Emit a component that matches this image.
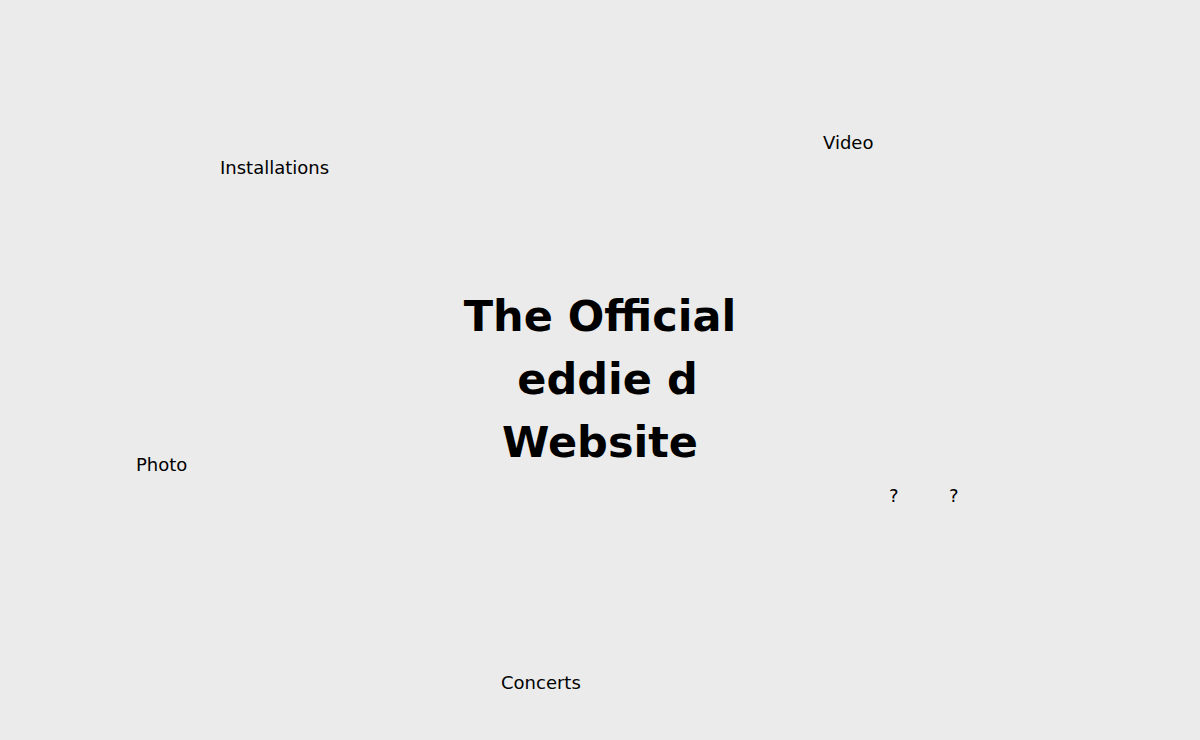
const links = [
  { label: "Installations", cls: "left-[220px] top-[156px]" },
  { label: "Video", cls: "left-[823px] top-[131px]" },
  { label: "Photo", cls: "left-[136px] top-[453px]" },
  { label: "?", cls: "left-[889px] top-[484px]" },
  { label: "?", cls: "left-[949px] top-[484px]" },
  { label: "Concerts", cls: "left-[501px] top-[671px]" },
];

export default function App() {
  return (
    <div
      className="relative h-[740px] w-full overflow-hidden bg-[#ebebeb] text-black"
      style={{ fontFamily: '"DejaVu Sans", Verdana, sans-serif' }}
    >
      <h1 className="pt-[285px] text-center text-[43px] font-bold leading-[63px]">
        The Official
        <br />
        {"\u00a0eddie d"}
        <br />
        Website
      </h1>

      {links.map((l, i) => (
        <a
          key={i}
          href="#"
          className={`absolute text-[18px] leading-[24px] ${l.cls}`}
        >
          {l.label}
        </a>
      ))}
    </div>
  );
}
